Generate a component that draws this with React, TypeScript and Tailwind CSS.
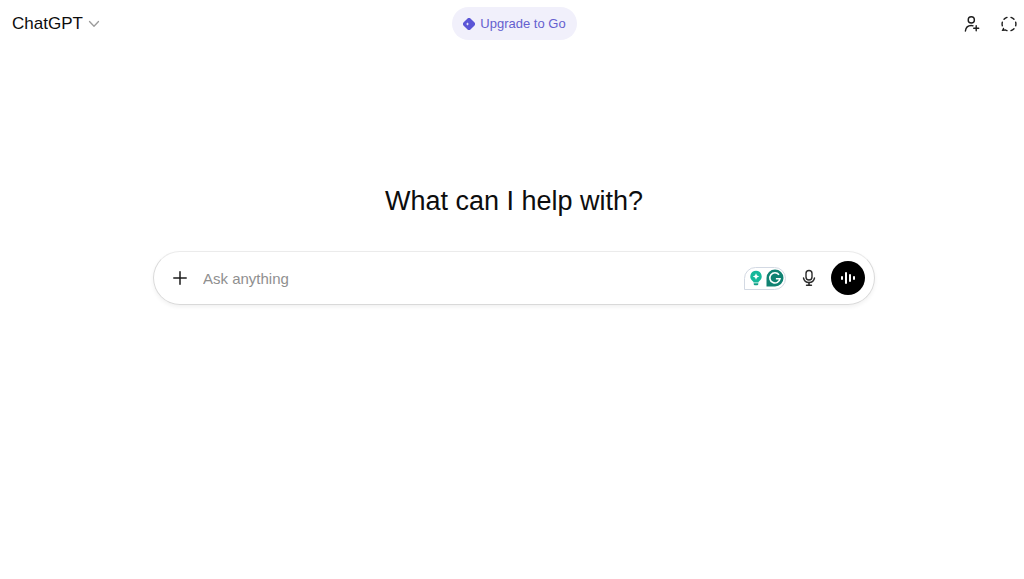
import React, { useState } from "react";

const ChevronIcon = () => (
  <svg width="12" height="12" viewBox="0 0 12 12" fill="none" aria-hidden="true">
    <path
      d="M1.500 3.500 6 8.300l4.500-4.800"
      stroke="#9b9b9b"
      strokeWidth="1.3"
      strokeLinecap="round"
      strokeLinejoin="round"
    />
  </svg>
);

const UpgradeIcon = () => (
  <svg width="12" height="12" viewBox="0 0 12 12" aria-hidden="true">
    <path
      d="M4.300.700a2.400 2.400 0 0 1 3.400 0l3.600 3.600a2.400 2.400 0 0 1 0 3.400l-3.600 3.600a2.400 2.400 0 0 1-3.400 0L.700 7.700a2.400 2.400 0 0 1 0-3.400Z"
      fill="#5b55d6"
    />
    <path d="M4.500 4.200 5 5.500l1.300.5-1.300.5-.5 1.300L4 6.500 2.700 6 4 5.500Z" fill="#f1f0fb" />
  </svg>
);

const AddPersonIcon = () => (
  <svg width="16" height="16" viewBox="0 0 16 16" fill="none" stroke="#1c1c1c" strokeWidth="1.400" strokeLinecap="round" aria-hidden="true">
    <circle cx="7.300" cy="3.900" r="3.100" />
    <path d="M1.400 15c.4-3.500 2.700-5.500 5.900-5.500.7 0 1.200.1 1.700.3" />
    <path d="M12.200 9.700v5M9.700 12.200h5" />
  </svg>
);

const TemporaryChatIcon = () => (
  <svg width="16" height="16" viewBox="0 0 16 16" fill="none" stroke="#1c1c1c" strokeWidth="1.400" strokeLinecap="round" aria-hidden="true">
    <path d="M3 3.300Q4.300 1.900 6 1.400" />
    <path d="M10 1.400Q11.700 1.900 13 3.300" />
    <path d="M14.700 6.200q.5 1.800 0 3.600" />
    <path d="M13 12.700q-1.300 1.400-3 1.900" />
    <path d="M6 14.600q-.8-.2-1.500-.6L1.700 14.200l.8-1.700" />
    <path d="M1.300 9.800q-.5-1.800 0-3.600" />
  </svg>
);

const PlusIcon = () => (
  <svg width="14" height="14" viewBox="0 0 14 14" aria-hidden="true">
    <path d="M7 .8v12.400M.8 7h12.400" stroke="#1c1c1c" strokeWidth="1.500" strokeLinecap="round" />
  </svg>
);

const TipIcon = () => (
  <svg width="14" height="16" viewBox="0 0 14 16" aria-hidden="true">
    <path
      d="M7 .8a5.700 5.700 0 0 0-3.200 10.400c.5.400.7.800.7 1.300h5c0-.5.200-.9.700-1.300A5.700 5.700 0 0 0 7 .8Z"
      fill="#15b89a"
    />
    <path d="M4.700 13.300h4.600v.7a1.200 1.200 0 0 1-1.200 1.200H5.900A1.200 1.200 0 0 1 4.700 14Z" fill="#129e87" />
    <path d="M7 3.300 8 5.500l2.200 1L8 7.500 7 9.700 6 7.500l-2.200-1 2.200-1Z" fill="#fff" />
  </svg>
);

const WritingIcon = () => (
  <svg width="18" height="18" viewBox="0 0 18 18" aria-hidden="true">
    <path d="M9 .5A8.500 8.500 0 1 1 9 17.500H.5V9A8.500 8.500 0 0 1 9 .5Z" fill="#108272" />
    <path
      d="M13 5.800A5.100 5.100 0 1 0 14 9.700H9.900"
      fill="none"
      stroke="#fff"
      strokeWidth="1.600"
    />
  </svg>
);

const MicIcon = () => (
  <svg width="14" height="18" viewBox="0 0 14 18" fill="none" stroke="#2b2b2b" strokeWidth="1.400" strokeLinecap="round" aria-hidden="true">
    <rect x="4" y="1.500" width="6" height="9.500" rx="3" />
    <path d="M1.500 9a5.600 5.600 0 0 0 11 0" />
    <path d="M7 13.600v2.400M4.600 16.200h4.800" strokeWidth="1.600" />
  </svg>
);

const VoiceIcon = () => (
  <svg width="16" height="14" viewBox="0 0 16 14" stroke="#fff" strokeWidth="2" strokeLinecap="round" aria-hidden="true">
    <path d="M2 6v2M6 2v10M10 4v6M14 6v2" />
  </svg>
);

const Header = () => (
  <header className="grid grid-cols-[1fr_auto_1fr] items-center pt-[7px] pr-[7px] pl-3">
    <button type="button" className="flex items-center gap-[5px] justify-self-start text-[17px] leading-6">
      ChatGPT
      <ChevronIcon />
    </button>
    <button
      type="button"
      className="flex h-[33px] items-center gap-[5px] rounded-full bg-[#f1f0fb] px-[11px] text-[13px] leading-5 text-[#6560cf]"
    >
      <UpgradeIcon />
      Upgrade to Go
    </button>
    <div className="flex items-center gap-[21px] justify-self-end">
      <button type="button" aria-label="Start a group chat">
        <AddPersonIcon />
      </button>
      <button type="button" aria-label="Turn on temporary chat">
        <TemporaryChatIcon />
      </button>
    </div>
  </header>
);

const Composer = () => {
  const [prompt, setPrompt] = useState("");

  return (
    <form
      onSubmit={(e) => e.preventDefault()}
      className="mt-8 flex h-[54px] w-full max-w-[722px] items-center rounded-full border border-[#d9d9d9] border-t-[#ebebeb] pr-[9px] pl-[19px] shadow-[0_2px_4px_rgba(0,0,0,0.06)]"
    >
      <button type="button" aria-label="Add files" className="shrink-0">
        <PlusIcon />
      </button>
      <input
        type="text"
        aria-label="Ask anything"
        placeholder="Ask anything"
        value={prompt}
        onChange={(e) => setPrompt(e.target.value)}
        className="ml-4 h-6 min-w-0 flex-1 text-[15px] outline-none placeholder:text-[#8f8f8f]"
      />

      {/* Writing assistant */}
      <div className="flex h-[23px] shrink-0 items-center gap-[3px] rounded-full rounded-bl-none border border-[#d3d9e3] pr-px pl-1">
        <button type="button" aria-label="Writing suggestions">
          <TipIcon />
        </button>
        <button type="button" aria-label="Check writing">
          <WritingIcon />
        </button>
      </div>

      <button type="button" aria-label="Dictate" className="ml-4 shrink-0">
        <MicIcon />
      </button>
      <button
        type="button"
        aria-label="Use voice mode"
        className="ml-[15px] flex size-[34px] shrink-0 items-center justify-center rounded-full bg-black"
      >
        <VoiceIcon />
      </button>
    </form>
  );
};

const App = () => {
  return (
    <div className="min-h-screen bg-white font-['Liberation_Sans',Arial,sans-serif] text-[#0d0d0d]">
      <Header />
      <main className="flex flex-col items-center pt-[143px] pr-3 pl-4">
        <h1 className="text-center text-[27px] leading-9">What can I help with?</h1>
        <Composer />
      </main>
    </div>
  );
};

export default App;
